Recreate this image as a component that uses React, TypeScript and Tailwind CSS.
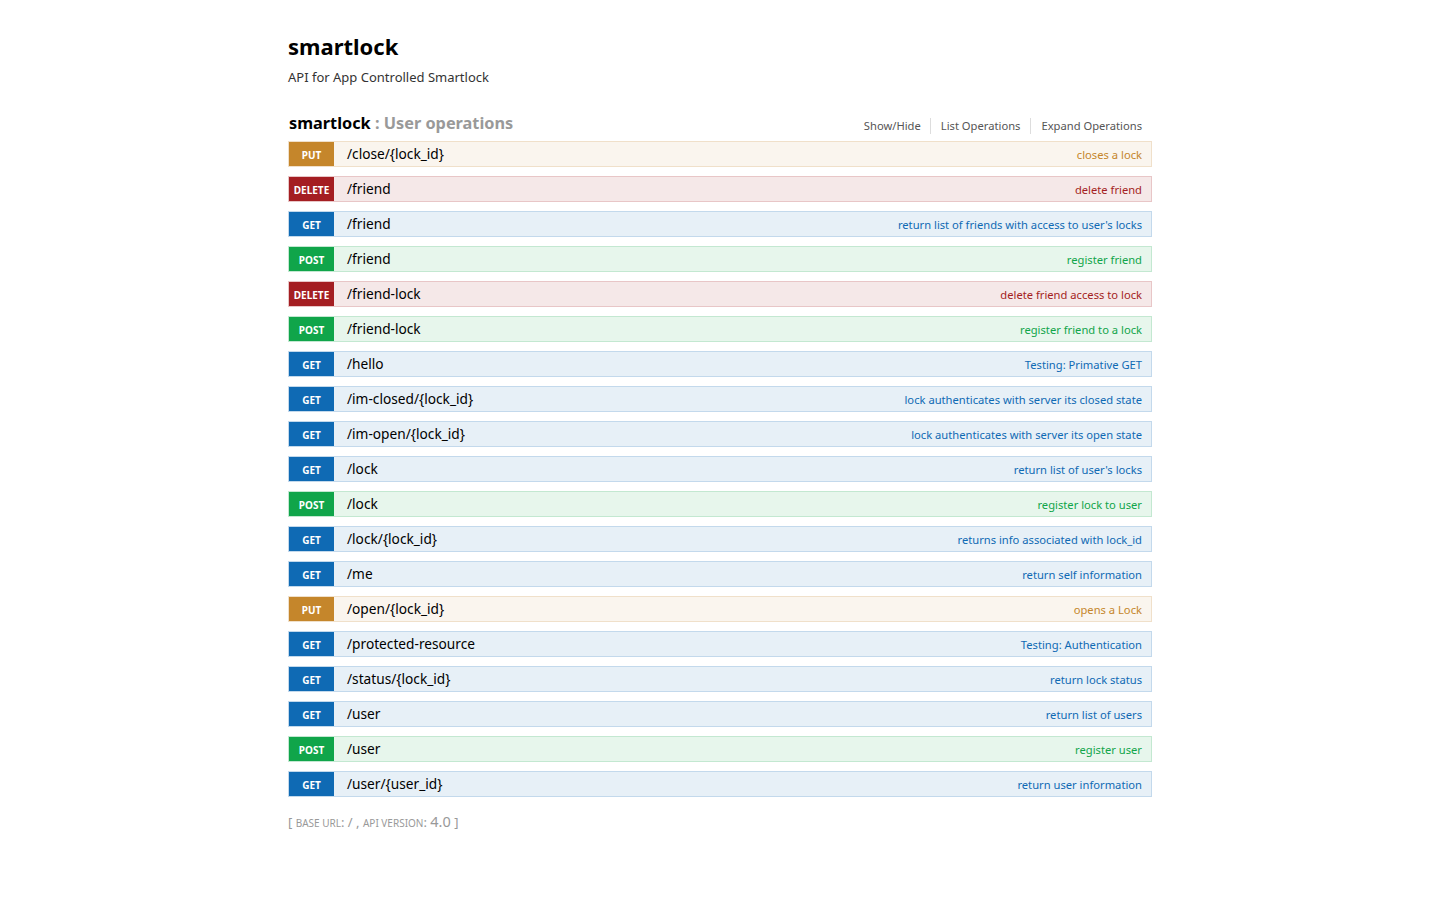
const ops = [
  { m: "PUT", path: "/close/{lock_id}", summary: "closes a lock" },
  { m: "DELETE", path: "/friend", summary: "delete friend" },
  { m: "GET", path: "/friend", summary: "return list of friends with access to user's locks" },
  { m: "POST", path: "/friend", summary: "register friend" },
  { m: "DELETE", path: "/friend-lock", summary: "delete friend access to lock" },
  { m: "POST", path: "/friend-lock", summary: "register friend to a lock" },
  { m: "GET", path: "/hello", summary: "Testing: Primative GET" },
  { m: "GET", path: "/im-closed/{lock_id}", summary: "lock authenticates with server its closed state" },
  { m: "GET", path: "/im-open/{lock_id}", summary: "lock authenticates with server its open state" },
  { m: "GET", path: "/lock", summary: "return list of user's locks" },
  { m: "POST", path: "/lock", summary: "register lock to user" },
  { m: "GET", path: "/lock/{lock_id}", summary: "returns info associated with lock_id" },
  { m: "GET", path: "/me", summary: "return self information" },
  { m: "PUT", path: "/open/{lock_id}", summary: "opens a Lock" },
  { m: "GET", path: "/protected-resource", summary: "Testing: Authentication" },
  { m: "GET", path: "/status/{lock_id}", summary: "return lock status" },
  { m: "GET", path: "/user", summary: "return list of users" },
  { m: "POST", path: "/user", summary: "register user" },
  { m: "GET", path: "/user/{user_id}", summary: "return user information" },
]

const styles: Record<string, { row: string; badge: string; text: string }> = {
  GET: { row: "bg-[#e7f0f7] border-[#c3d9ec]", badge: "bg-[#0f6ab4]", text: "text-[#0f6ab4]" },
  POST: { row: "bg-[#e7f6ec] border-[#c3e8d1]", badge: "bg-[#10a54a]", text: "text-[#10a54a]" },
  PUT: { row: "bg-[#faf5ee] border-[#f0e0ca]", badge: "bg-[#c5862b]", text: "text-[#c5862b]" },
  DELETE: { row: "bg-[#f5e8e8] border-[#e8c6c7]", badge: "bg-[#a41e22]", text: "text-[#a41e22]" },
}

export default function App() {
  return (
    <div className="min-h-[900px] bg-white font-['Noto_Sans','Open_Sans',sans-serif] text-[#333]">
      <div className="mx-auto w-[864px] pt-[31px]">
        {/* info */}
        <h1 className="text-[22px] font-bold leading-[30px] text-black">smartlock</h1>
        <p className="mt-[7px] text-[13px] leading-[18px] text-[#333]">API for App Controlled Smartlock</p>

        {/* resource heading */}
        <div className="mt-[25px] flex items-end justify-between pl-[1px] pr-[10px]">
          <h2 className="text-[16.3px] font-bold leading-[24px] text-black">
            smartlock <span className="text-[#999]">: User operations</span>
          </h2>
          <div className="flex items-center pb-[1px] text-[11.2px] leading-[16px] text-[#555]">
            <span className="border-r border-[#ddd] pr-[9px]">Show/Hide</span>
            <span className="border-r border-[#ddd] px-[10px]">List Operations</span>
            <span className="pl-[10px]">Expand Operations</span>
          </div>
        </div>

        {/* operations */}
        <ul className="mt-[6px] flex flex-col gap-[9px]">
          {ops.map((op, i) => {
            const s = styles[op.m]
            return (
              <li key={i} className={`flex h-[26px] items-center border ${s.row}`}>
                <span
                  className={`flex h-[24px] w-[45px] items-center justify-center pt-[2px] text-[10px] font-bold text-white ${s.badge}`}
                >
                  {op.m}
                </span>
                <span className="ml-[13px] text-[13.7px] leading-[18px] text-black">{op.path}</span>
                <span className={`ml-auto pr-[9px] pt-[2px] text-[11.2px] leading-[16px] ${s.text}`}>{op.summary}</span>
              </li>
            )
          })}
        </ul>

        {/* footer */}
        <div className="mt-[14px] text-[13px] text-[#999]">
          [ <span className="text-[10px] uppercase">Base url</span>: / , <span className="text-[10px] uppercase">api version</span>:{" "}
          <span className="text-[14.5px]">4.0</span> ]
        </div>
      </div>
    </div>
  )
}
